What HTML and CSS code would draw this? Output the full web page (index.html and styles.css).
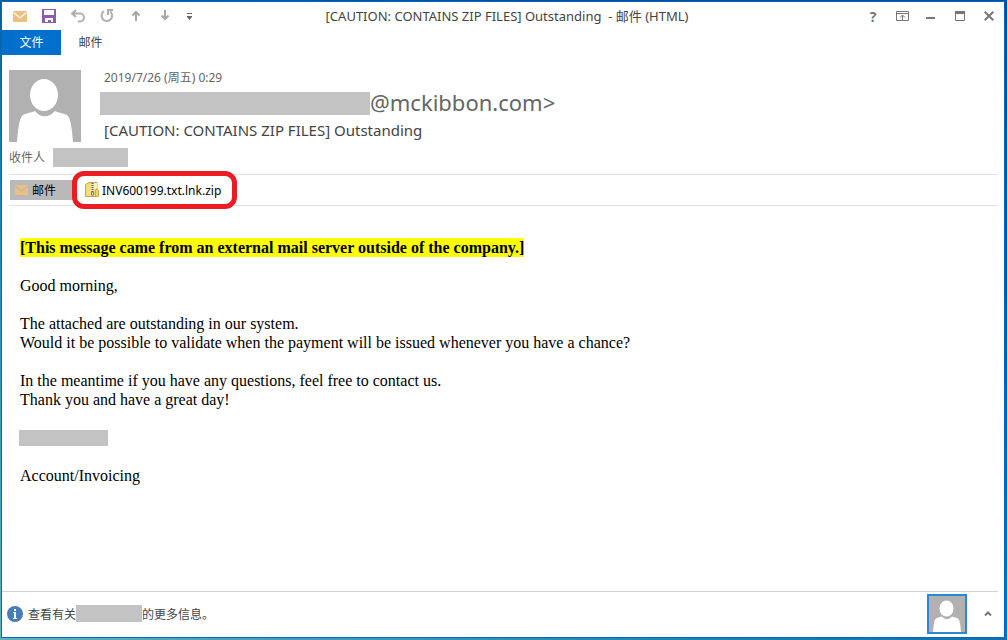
FILE: index.html
```
<!DOCTYPE html>
<html lang="zh-CN">
<head>
    <meta charset="UTF-8">
    <title>[CAUTION: CONTAINS ZIP FILES] Outstanding - 邮件 (HTML)</title>
    <link rel="stylesheet" href="styles.css">
</head>
<body>
    <svg class="defs" width="0" height="0" aria-hidden="true">
        <symbol id="envelope" viewBox="0 0 14 11">
            <rect width="14" height="11" fill="#eec07f"/>
            <path d="M0 1l7 6 7-6" fill="none" stroke="#fff" stroke-width="1.3"/>
        </symbol>
        <symbol id="envelope-gray" viewBox="0 0 14 11">
            <rect width="14" height="11" fill="#eec07f"/>
            <path d="M0 1l7 6 7-6" fill="none" stroke="#b9b9b9" stroke-width="1.3"/>
        </symbol>
        <symbol id="person" viewBox="0 0 72 72">
            <rect width="72" height="72" fill="#b1b1b1"/>
            <ellipse cx="35" cy="25" rx="14" ry="16" fill="#fff"/>
            <path d="M8 72C9 60 10 50 13 46c3-3 8-3 13-5 5 7 14 7 20 0 4 2 10 2 13 5 3 4 4 14 5 26z" fill="#fff"/>
        </symbol>
    </svg>

    <div class="window">
        <header class="title-bar">
            <div class="quick-access">
                <svg class="app-icon" width="14" height="11"><use href="#envelope"/></svg>
                <button class="tool" aria-label="保存">
                    <svg width="14" height="14"><path d="M0 0h14v14H0z" fill="#8d5cb0"/><path d="M2 1h10v5H2zM3 9h8v4H9v-2H6v2H3z" fill="#fff"/></svg>
                </button>
                <button class="tool" aria-label="撤消">
                    <svg width="14" height="14" fill="none" stroke="#b0b0b0" stroke-width="2"><path d="M5 1L1 4.500l4 3.500M1.500 4.500H9a4 4 0 0 1 0 8H7"/></svg>
                </button>
                <button class="tool" aria-label="重复">
                    <svg width="14" height="14" fill="none" stroke="#b0b0b0" stroke-width="2"><path d="M4 2.200A5.300 5.300 0 1 0 10 2.400M8 6V1h5"/></svg>
                </button>
                <button class="tool" aria-label="上一项">
                    <svg width="14" height="14" fill="none" stroke="#a6a6a6" stroke-width="2"><path d="M7 12V3M3.500 6.500L7 3l3.500 3.500"/></svg>
                </button>
                <button class="tool" aria-label="下一项">
                    <svg width="14" height="14" fill="none" stroke="#a6a6a6" stroke-width="2"><path d="M7 1v9M3.500 6.500L7 10l3.500-3.500"/></svg>
                </button>
                <button class="tool more" aria-label="自定义快速访问工具栏">
                    <svg width="5" height="7" fill="#6a6a6a"><path d="M0 0h5v1H0zM0 3h5v1H0zM0 4h5L2.500 7z"/></svg>
                </button>
            </div>
            <div class="window-title">[CAUTION: CONTAINS ZIP FILES] Outstanding  - 邮件 (HTML)</div>
            <div class="window-controls">
                <button class="tool help" aria-label="帮助">?</button>
                <button class="tool" aria-label="功能区显示选项">
                    <svg width="13" height="10" fill="none" stroke="#777"><path d="M.5.5h12v9H.5zM.5 2.500h12M6.500 9V4.500M4 6.500L6.500 4 9 6.500"/></svg>
                </button>
                <button class="tool" aria-label="最小化">
                    <svg width="10" height="10" fill="#777"><path d="M0 6h9v2H0z"/></svg>
                </button>
                <button class="tool" aria-label="最大化">
                    <svg width="10" height="10"><path d="M.5.5h9v9h-9z" fill="none" stroke="#777"/><path d="M0 0h10v3H0z" fill="#777"/></svg>
                </button>
                <button class="tool" aria-label="关闭">
                    <svg width="10" height="10" fill="none" stroke="#777" stroke-width="2"><path d="M.7.7l8.600 8.600M9.300.7L.7 9.300"/></svg>
                </button>
            </div>
        </header>

        <nav class="ribbon">
            <button class="ribbon-tab active">文件</button>
            <button class="ribbon-tab">邮件</button>
        </nav>

        <section class="message-header">
            <div class="sender">
                <svg class="photo" width="72" height="72"><use href="#person"/></svg>
                <div class="details">
                    <div class="date">2019/7/26 (周五) 0:29</div>
                    <div class="from"><span class="redacted from-name"></span>@mckibbon.com&gt;</div>
                    <div class="subject">[CAUTION: CONTAINS ZIP FILES] Outstanding</div>
                </div>
            </div>
            <div class="recipients">收件人 <span class="redacted to-name"></span></div>
            <div class="attachments">
                <button class="message-tab">
                    <svg width="13" height="10"><use href="#envelope-gray"/></svg>
                    邮件
                </button>
                <a class="attachment" href="#">
                    <svg width="14" height="16">
                        <path d="M.5 2.500L4 .5h8v14H.5z" fill="#f5dc7c" stroke="#c9a648"/>
                        <path d="M9 1h3v6H9z" fill="#fbf0b5"/>
                        <path d="M11.500 6.500l2 2v6h-3v-6z" fill="#f3d468" stroke="#c9a648"/>
                        <path d="M6 1h3v10H6z" fill="#e9e9e9"/>
                        <path d="M7.500 1v9" stroke="#555" stroke-width="2" stroke-dasharray="1 1"/>
                        <path d="M6.500 10h2v3h-2z" fill="#fff" stroke="#777"/>
                    </svg>
                    INV600199.txt.lnk.zip
                </a>
            </div>
        </section>

        <main class="message-body">
            <p><mark>[This message came from an external mail server outside of the company.]</mark></p>
            <p>Good morning,</p>
            <p>The attached are outstanding in our system.<br>
            Would it be possible to validate when the payment will be issued whenever you have a chance?</p>
            <p>In the meantime if you have any questions, feel free to contact us.<br>
            Thank you and have a great day!</p>
            <p class="signature"><span class="redacted"></span></p>
            <p>Account/Invoicing</p>
        </main>

        <footer class="people-pane">
            <svg class="info" width="16" height="16">
                <circle cx="8" cy="8" r="8" fill="#4a7db5"/>
                <path d="M7 3h2v2H7zM6 6h3v6h1v1H6v-1h1V7H6z" fill="#fff"/>
            </svg>
            <div class="people-text">查看有关<span class="redacted"></span>的更多信息。</div>
            <button class="contact" aria-label="联系人"><svg width="36" height="36"><use href="#person"/></svg></button>
            <button class="tool" aria-label="展开">
                <svg width="8" height="5" fill="none" stroke="#777" stroke-width="2"><path d="M1 4.500l3-3 3 3"/></svg>
            </button>
        </footer>
    </div>
</body>
</html>
```
FILE: styles.css
```
* {
    box-sizing: border-box;
}

body {
    margin: 0;
    padding: 1px 2px 2px 1px;
    min-height: 100vh;
    display: flex;
    /* desktop behind the window: teal in the lower left, blue elsewhere */
    background: radial-gradient(ellipse at bottom left, #5fb3bd, #1a83b4 50%, transparent 80%), linear-gradient(to bottom, #024a94, #0a66b4);
    font-family: "Noto Sans", "Noto Sans CJK SC", sans-serif;
    font-size: 12px;
    color: #444;
}

button {
    border: 0;
    padding: 0;
    background: none;
    font: inherit;
    color: inherit;
    cursor: pointer;
}

svg {
    display: block;
    flex: none;
}

.defs {
    position: absolute;
}

.redacted {
    display: inline-block;
    background: #c3c3c3;
}

.window {
    flex: 1;
    display: flex;
    flex-direction: column;
    background: #fff;
    border: 1px solid #0067c0;
}

/* title bar */
.title-bar {
    display: grid;
    grid-template-columns: 1fr auto 1fr;
    align-items: center;
    height: 28px;
    padding: 0 3px 0 11px;
}

.quick-access,
.window-controls {
    display: flex;
    align-items: center;
}

.quick-access {
    gap: 15px;
}

.window-controls {
    justify-content: flex-end;
    gap: 5px;
}

.window-controls .tool {
    width: 24px;
    height: 24px;
    display: grid;
    place-items: center;
}

.help {
    font-family: "Open Sans", sans-serif;
    font-size: 14px;
    font-weight: bold;
    color: #777;
}

.window-title {
    font-size: 13px;
    line-height: 16px;
    white-space: pre;
}

/* ribbon */
.ribbon {
    display: flex;
    height: 25px;
}

.ribbon-tab {
    width: 59px;
    padding-bottom: 2px;
}

.ribbon-tab.active {
    background: #0070cc;
    color: #fff;
}

/* message header */
.message-header {
    padding: 15px 6px 0 7px;
}

.sender {
    display: flex;
    gap: 19px;
}

.details {
    line-height: 16px;
}

.date {
    padding-left: 4px;
    color: #666;
}

.from {
    display: flex;
    height: 23px;
    margin: 6px 0 5px;
    font-size: 22px;
    line-height: 20px;
    color: #666;
}

.from-name {
    width: 270px;
    height: 23px;
}

.subject {
    padding-left: 4px;
    font-size: 15px;
    line-height: 20px;
}

.recipients {
    display: flex;
    align-items: center;
    gap: 8px;
    height: 20px;
    margin: 5px 0 7px;
    color: #666;
}

.to-name {
    width: 75px;
    height: 19px;
}

.attachments {
    display: flex;
    align-items: center;
    height: 32px;
    padding-left: 1px;
    border-top: 1px solid #e1e1e1;
    border-bottom: 1px solid #e1e1e1;
    color: #000;
}

.message-tab {
    display: flex;
    align-items: center;
    gap: 4px;
    width: 67px;
    height: 20px;
    padding-left: 5px;
    background: #b9b9b9;
}

.attachment {
    position: relative;
    display: flex;
    align-items: center;
    gap: 3px;
    padding-left: 8px;
    color: #000;
    text-decoration: none;
}

.attachment::after {
    content: "";
    position: absolute;
    inset: -11px -16px -10px -5px;
    border: 5px solid #ed1c24;
    border-radius: 12px;
}

/* message text */
.message-body {
    flex: 1;
    padding: 32px 18px;
    font-family: "Liberation Serif", serif;
    font-size: 16px;
    line-height: 19px;
    color: #000;
}

.message-body p {
    margin: 0 0 19px;
}

mark {
    display: inline-block;
    background: #ff0;
    font-weight: bold;
}

.signature {
    display: flex;
    align-items: center;
    height: 19px;
}

.signature .redacted {
    width: 89px;
    height: 16px;
    margin-left: -1px;
}

/* people pane */
.people-pane {
    display: flex;
    align-items: center;
    height: 46px;
    margin-right: 6px;
    padding: 0 6px 2px 5px;
    border-top: 1px solid #d2d2d2;
}

.people-text {
    display: flex;
    align-items: center;
    flex: 1;
    padding-left: 5px;
}

.people-text .redacted {
    width: 66px;
    height: 17px;
}

.contact {
    margin-right: 17px;
    border: 2px solid #2b88d9;
}
```
